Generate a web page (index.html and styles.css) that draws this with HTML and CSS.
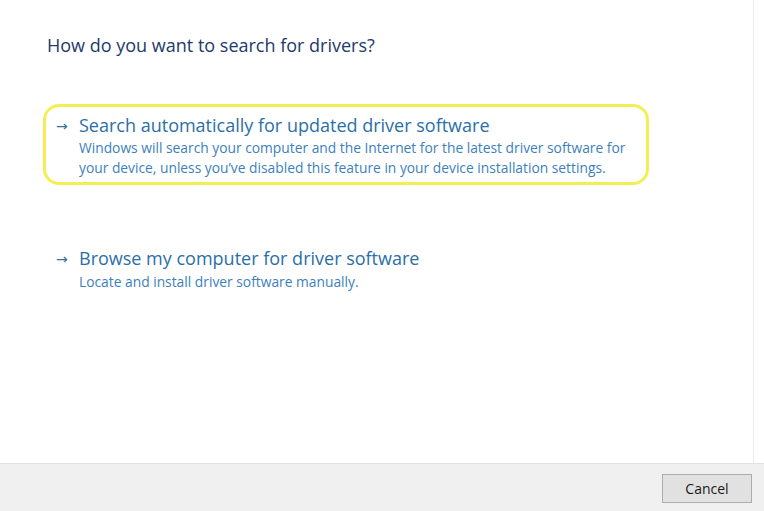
FILE: index.html
```html
<!DOCTYPE html>
<html>
<head>
<meta charset="utf-8">
<link rel="stylesheet" href="styles.css">
</head>
<body>
<div class="window">
  <main class="content">
    <h1 class="heading">How do you want to search for drivers?</h1>
    <div class="option highlighted">
      <div class="option-title"><span class="arrow">→</span>Search automatically for updated driver software</div>
      <div class="option-desc">Windows will search your computer and the Internet for the latest driver software for<br>your device, unless you’ve disabled this feature in your device installation settings.</div>
    </div>
    <div class="option second">
      <div class="option-title"><span class="arrow">→</span>Browse my computer for driver software</div>
      <div class="option-desc">Locate and install driver software manually.</div>
    </div>
  </main>
  <footer class="footer">
    <button class="btn">Cancel</button>
  </footer>
</div>
</body>
</html>
```

FILE: styles.css
```css
html, body {
  margin: 0;
  padding: 0;
  background: #ffffff;
}
body {
  font-family: "Open Sans", "Noto Sans", sans-serif;
}
.window {
  width: 764px;
  height: 511px;
  display: flex;
  flex-direction: column;
}
.content {
  flex: 1;
  padding: 33px 0 0 47px;
  border-right: 1px solid #ececec;
  margin-right: 10px;
}
.heading {
  margin: 0;
  font-weight: normal;
  font-size: 18px;
  line-height: 24px;
  color: #1d3a6b;
}
.option {
  width: 590px;
  margin-left: -4px;
  padding: 5px 0 4px 10px;
  border: 3px solid transparent;
  border-radius: 16px;
}
.option.highlighted {
  margin-top: 47px;
  border-color: #f3ef52;
}
.option.second {
  margin-top: 52px;
}
.option.second .option-desc {
  margin-top: 1px;
}
.option-title {
  position: relative;
  font-size: 18px;
  line-height: 26px;
  color: #2b6fa8;
  padding-left: 23px;
}
.arrow {
  position: absolute;
  left: 0;
  top: 1px;
  font-family: "DejaVu Sans", sans-serif;
  font-size: 14px;
  color: #3a6f9f;
}
.option-desc {
  padding-left: 23px;
  font-size: 13.8px;
  line-height: 20px;
  color: #3d7fbd;
}
.footer {
  height: 48px;
  background: #f0f0f0;
  border-top: 1px solid #e2e2e2;
  display: flex;
  justify-content: flex-end;
  align-items: flex-start;
  padding: 10px 12px 0 0;
  box-sizing: border-box;
}
.btn {
  width: 90px;
  height: 29px;
  background: #e1e1e1;
  border: 1px solid #adadad;
  font-family: "Open Sans", "Noto Sans", sans-serif;
  font-size: 14px;
  color: #1a1a1a;
  padding: 0;
}
```
